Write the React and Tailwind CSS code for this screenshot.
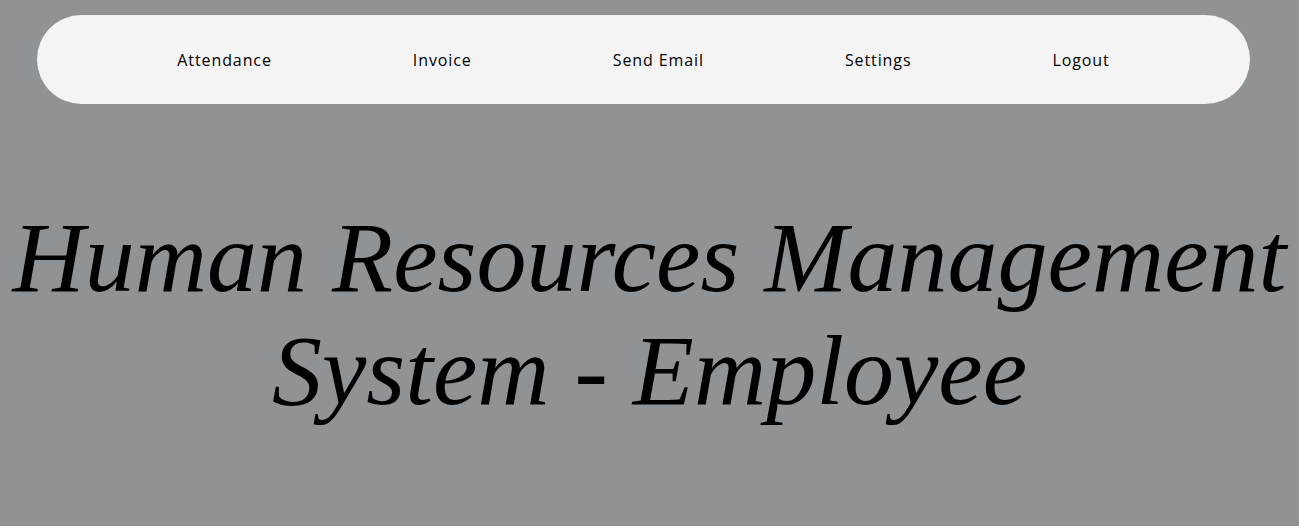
export default function App() {
  const items = ["Attendance", "Invoice", "Send Email", "Settings", "Logout"];
  return (
    <div className="min-h-[526px] bg-[#8f9396] pt-[15px]">
      <nav className="mx-[37px] w-[1213px] h-[89px] rounded-full bg-[#f4f4f4] flex items-center justify-center gap-[141px]">
        {items.map((t) => (
          <div key={t} className="text-center text-[16px] tracking-[0.9px] text-black pt-[1px]" style={{ fontFamily: "'Open Sans', sans-serif" }}>
            {t}
          </div>
        ))}
      </nav>
      <h1
        className="mt-[97px] text-center italic text-black text-[100px] leading-[113px] px-2"
        style={{ fontFamily: "'Liberation Serif', 'DejaVu Serif', serif" }}
      >
        Human Resources Management System - Employee
      </h1>
    </div>
  );
}
